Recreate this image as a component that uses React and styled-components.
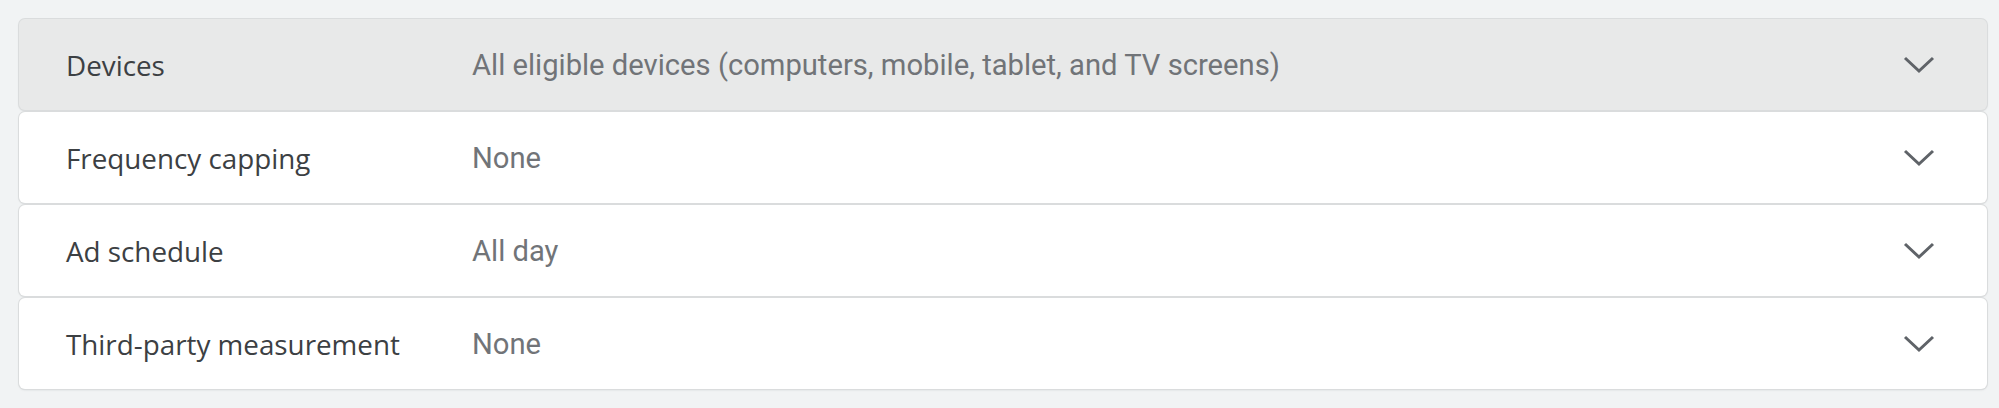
import * as React from 'react'
import styled, { createGlobalStyle } from 'styled-components'

const GlobalStyle = createGlobalStyle`
	html, body {
		margin: 0;
		padding: 0;
		background: #f1f3f4;
	}
`

const Page = styled.div`
	padding: 19px 12px 19px 19px;
	display: flex;
	flex-direction: column;
	gap: 2px;
`

const Row = styled.div`
	display: flex;
	align-items: center;
	height: 91px;
	padding: 0 52px 0 47px;
	background: ${props => (props.active ? '#e8e9e9' : '#ffffff')};
	border-radius: 6px;
	box-shadow: 0 0 0 1px #dadcdd, 0 1px 2px rgba(60, 64, 67, 0.18);
`

const Label = styled.div`
	width: 406px;
	font-family: "Open Sans", Roboto, sans-serif;
	font-size: 27.8px;
	color: #3c4043;
`

const Value = styled.div`
	flex: 1;
	font-family: Roboto, "Liberation Sans", sans-serif;
	font-size: 29.2px;
	color: #717478;
`

const Chevron = styled.svg`
	width: 32px;
	height: 18px;
	flex: none;
`

const settings = [
	{ label: 'Devices', value: 'All eligible devices (computers, mobile, tablet, and TV screens)', active: true },
	{ label: 'Frequency capping', value: 'None' },
	{ label: 'Ad schedule', value: 'All day' },
	{ label: 'Third-party measurement', value: 'None' },
]

export default function App() {
	return (
		<>
			<GlobalStyle />
			<Page>
				{settings.map(s => (
					<Row key={s.label} active={s.active}>
						<Label>{s.label}</Label>
						<Value>{s.value}</Value>
						<Chevron viewBox="0 0 32 18">
							<path d="M2 2 L16 15 L30 2" fill="none" stroke="#5f6368" strokeWidth="3" />
						</Chevron>
					</Row>
				))}
			</Page>
		</>
	)
}
